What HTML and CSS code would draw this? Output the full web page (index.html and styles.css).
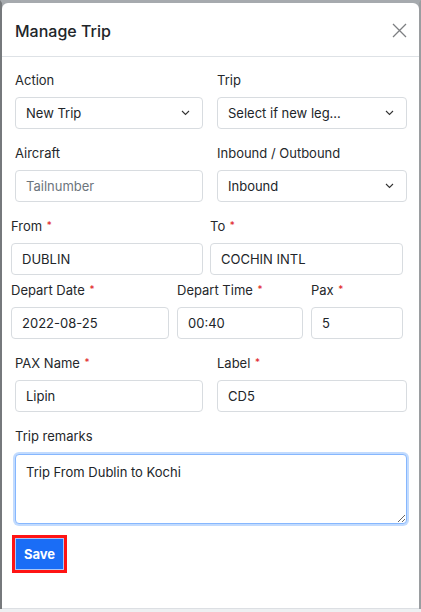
FILE: index.html
```html
<!DOCTYPE html>
<html lang="en">
<head>
<meta charset="utf-8">
<title>Manage Trip</title>
<link rel="stylesheet" href="styles.css">
</head>
<body>
<div class="frame">
  <div class="modal">
    <div class="modal-header">
      <h5 class="modal-title">Manage Trip</h5>
      <button class="close" type="button" aria-label="Close">
        <svg width="15" height="15" viewBox="0 0 15 15"><path d="M1 1 L14 14 M14 1 L1 14" stroke="#7d7f82" stroke-width="1.3" fill="none"/></svg>
      </button>
    </div>
    <div class="modal-body">
      <div class="row row-a first">
        <div class="group">
          <label class="label">Action</label>
          <div class="control select"><span>New Trip</span>
            <svg class="chev" width="9" height="6" viewBox="0 0 9 6"><path d="M1 1 L4.5 4.5 L8 1" stroke="#333" stroke-width="1.1" fill="none"/></svg>
          </div>
        </div>
        <div class="group">
          <label class="label">Trip</label>
          <div class="control select"><span>Select if new leg...</span>
            <svg class="chev" width="9" height="6" viewBox="0 0 9 6"><path d="M1 1 L4.5 4.5 L8 1" stroke="#333" stroke-width="1.1" fill="none"/></svg>
          </div>
        </div>
      </div>
      <div class="row row-a">
        <div class="group">
          <label class="label">Aircraft</label>
          <input class="control" type="text" placeholder="Tailnumber">
        </div>
        <div class="group">
          <label class="label">Inbound / Outbound</label>
          <div class="control select"><span>Inbound</span>
            <svg class="chev" width="9" height="6" viewBox="0 0 9 6"><path d="M1 1 L4.5 4.5 L8 1" stroke="#333" stroke-width="1.1" fill="none"/></svg>
          </div>
        </div>
      </div>
      <div class="row row-b">
        <div class="group">
          <label class="label">From <span class="req">*</span></label>
          <input class="control" type="text" value="DUBLIN">
        </div>
        <div class="group">
          <label class="label">To <span class="req">*</span></label>
          <input class="control" type="text" value="COCHIN INTL">
        </div>
      </div>
      <div class="row row-c">
        <div class="group">
          <label class="label">Depart Date <span class="req">*</span></label>
          <input class="control" type="text" value="2022-08-25">
        </div>
        <div class="group">
          <label class="label">Depart Time <span class="req">*</span></label>
          <input class="control" type="text" value="00:40">
        </div>
        <div class="group">
          <label class="label">Pax <span class="req">*</span></label>
          <input class="control" type="text" value="5">
        </div>
      </div>
      <div class="row row-a">
        <div class="group">
          <label class="label">PAX Name <span class="req">*</span></label>
          <input class="control" type="text" value="Lipin">
        </div>
        <div class="group">
          <label class="label">Label <span class="req">*</span></label>
          <input class="control" type="text" value="CD5">
        </div>
      </div>
      <div class="row row-d">
        <div class="group">
          <label class="label">Trip remarks</label>
          <textarea class="control textarea">Trip From Dublin to Kochi</textarea>
        </div>
      </div>
      <div class="actions">
        <button class="btn-save" type="button">Save</button>
      </div>
    </div>
  </div>
</div>
</body>
</html>
```
FILE: styles.css
```css
* { box-sizing: border-box; }
html, body { margin: 0; padding: 0; }
body {
  background: #eef0f2;
  font-family: Inter, "Liberation Sans", Arial, sans-serif;
  color: #212529;
  font-size: 13px;
}
.frame {
  height: 609px;
  border-top: 3px solid #a6aaae;
  border-left: 2px solid #76797c;
  border-right: 2px solid #9a9da0;
  background: #a6aaae;
}
.modal {
  height: 606px;
  background: #fff;
  border-radius: 6px 6px 0 0;
  border-bottom: 1px solid #dcdfe3;
  position: relative;
}
.modal-header {
  height: 54px;
  border-bottom: 1px solid #dee2e6;
  display: flex;
  align-items: center;
  justify-content: space-between;
  padding: 0 12px 0 13px;
}
.modal-title {
  margin: 0;
  font-size: 16px;
  font-weight: 500;
  padding-top: 2px;
}
.close {
  border: 0;
  background: transparent;
  padding: 0;
  width: 15px;
  height: 15px;
  display: flex;
  margin-top: 2px;
}
.modal-body { padding-top: 13px; }
.row { display: grid; margin-top: 14px; }
.row.first { margin-top: 0; }
.row-a { grid-template-columns: 188px 190px; column-gap: 14px; padding-left: 13px; }
.row-b { grid-template-columns: 192px 193px; column-gap: 7px; padding-left: 9px; }
.row-c { grid-template-columns: 158px 126px 92px; column-gap: 8px; padding-left: 9px; margin-top: 5px; }
.row-d { grid-template-columns: 392px; padding-left: 13px; }
.group { display: flex; flex-direction: column; }
.label {
  display: block;
  line-height: 20px;
  height: 20px;
  margin-bottom: 7px;
  font-size: 13px;
  color: #25282b;
}
.req {
  color: #e0201c;
  font-size: 10px;
  margin-left: 1px;
  position: relative;
  top: -2px;
}
.control {
  height: 32px;
  border: 1px solid #d8dce0;
  border-radius: 4px;
  padding: 0 10px;
  font-family: inherit;
  font-size: 13px;
  color: #212529;
  background: #fff;
  width: 100%;
  outline: none;
  margin: 0;
}
.control::placeholder { color: #6c757d; }
.select {
  display: flex;
  align-items: center;
  justify-content: space-between;
  padding-right: 12px;
}
.chev { display: block; }
.textarea {
  height: 70px;
  margin-top: 1px;
  padding: 7px 10px;
  border-color: #86b7fe;
  box-shadow: 0 0 0 2px rgba(13, 110, 253, 0.25);
  resize: vertical;
  line-height: 20px;
}
.actions { padding-left: 10px; margin-top: 11px; }
.btn-save {
  width: 55px;
  height: 38px;
  background: #1a6df6;
  color: #fff;
  font-family: inherit;
  font-weight: 700;
  font-size: 13px;
  border: 3px solid #ff1414;
  box-shadow: inset 0 0 0 1px #a9c6f7;
  border-radius: 0;
  padding: 0;
}
```
